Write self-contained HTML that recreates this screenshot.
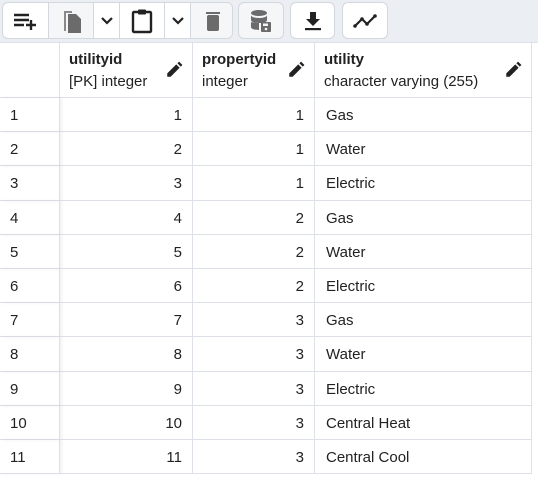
<!DOCTYPE html>
<html><head><meta charset="utf-8"><style>
*{box-sizing:border-box;margin:0;padding:0}
body{width:538px;height:489px;background:#fff;font-family:"Liberation Sans",Arial,sans-serif;color:#222;overflow:hidden;position:relative}
.tb{position:absolute;left:0;top:0;width:538px;height:43px;background:#ebeef2;border-bottom:1px solid #dde0e6}
.g{position:absolute;top:2px;height:37px;border:1px solid #d3d7de;border-radius:6px;background:#fff;overflow:hidden}
.s{position:absolute;top:0;height:100%;border-left:1px solid #d3d7de;display:flex;align-items:center;justify-content:center}
.dis{background:#f5f6f8}
svg{display:block}
.c{position:absolute;border-right:1px solid #dde0e6;border-bottom:1px solid #dde0e6;font-size:15px}
.h{font-size:15px;line-height:22px;padding:6px 0 0 9px}
.h b{font-weight:bold;color:#222}
.pen{position:absolute;right:9px;top:18px}
.num{text-align:right;padding-right:10px;line-height:36px}
.txt{padding-left:11px;line-height:36px}
.rn{padding-left:10px;line-height:36px;box-shadow:2px 0 3px rgba(0,0,0,.06)}
</style></head><body>
<div class="tb">
 <div class="g" style="left:2px;width:231px">
  <div class="s" style="left:0;width:45px;border:none"><svg width="26" height="20" viewBox="0 0 26 20"><path d="M1 4h15M1 9h15M1 14h10M18 9v10M13 14h10" stroke="#222" stroke-width="2.4" fill="none"/></svg></div>
  <div class="s dis" style="left:45px;width:45px"><svg width="22" height="26" viewBox="0 0 22 26"><path d="M4 3h8v2H6v18H4z" fill="#8a8a8a"/><path d="M8 6h8l5 5v14H8z" fill="#6b6b6b"/></svg></div>
  <div class="s" style="left:90px;width:26px"><svg width="14" height="10" viewBox="0 0 14 10"><path d="M2 2l5 5 5-5" stroke="#222" stroke-width="2.2" fill="none"/></svg></div>
  <div class="s" style="left:116px;width:45px"><svg width="22" height="26" viewBox="0 0 22 26"><rect x="2" y="4" width="18" height="20" rx="1" stroke="#222" stroke-width="2.4" fill="none"/><rect x="7" y="1.5" width="8" height="5" rx="1" fill="#222"/></svg></div>
  <div class="s" style="left:161px;width:26px"><svg width="14" height="10" viewBox="0 0 14 10"><path d="M2 2l5 5 5-5" stroke="#222" stroke-width="2.2" fill="none"/></svg></div>
  <div class="s dis" style="left:187px;width:44px"><svg width="16" height="22" viewBox="0 0 16 22"><rect x="1" y="2" width="14" height="2" fill="#6b6b6b"/><rect x="2" y="5" width="12" height="16" rx="2" fill="#6b6b6b"/></svg></div>
 </div>
 <div class="g dis" style="left:238px;width:46px"><div class="s" style="left:0;width:100%;border:none"><svg width="22" height="24" viewBox="0 0 22 24"><ellipse cx="9" cy="4" rx="8" ry="3" fill="#6b6b6b"/><path d="M1 6v5c0 2 4 3 8 3s8-1 8-3V6c0 2-4 3-8 3S1 8 1 6zM1 13v5c0 2 4 3 8 3V14c-4 0-8-1-8-1z" fill="#6b6b6b"/><rect x="11" y="13" width="10" height="10" rx="1" fill="#6b6b6b"/><rect x="13" y="14.5" width="5" height="2.5" fill="#f5f6f8"/><circle cx="16" cy="20" r="1.3" fill="#f5f6f8"/></svg></div></div>
 <div class="g" style="left:290px;width:45px"><div class="s" style="left:0;width:100%;border:none"><svg width="18" height="20" viewBox="0 0 18 20"><path d="M6 1h6v7h4l-7 7-7-7h4z" fill="#222"/><rect x="1" y="17" width="16" height="2.2" fill="#222"/></svg></div></div>
 <div class="g" style="left:342px;width:46px"><div class="s" style="left:0;width:100%;border:none"><svg width="24" height="14" viewBox="0 0 24 14"><path d="M2 12l7-7 5 5 8-8" stroke="#222" stroke-width="2.2" fill="none"/><circle cx="2" cy="12" r="1.8" fill="#222"/><circle cx="9" cy="5" r="1.8" fill="#222"/><circle cx="14" cy="10" r="1.8" fill="#222"/><circle cx="22" cy="2" r="1.8" fill="#222"/></svg></div></div>
</div>
<div id="t"></div>
<script>
var pen='<svg class="pen" width="18" height="18" viewBox="0 0 16 16"><path d="M2 14v-3l8-8 3 3-8 8z M11 2l1.5-1.5 3 3L14 5z" fill="#222"/></svg>';
var h='';
h+='<div class="c" style="left:0;top:43px;width:60px;height:55px"></div>';
h+='<div class="c h" style="left:60px;top:43px;width:133px;height:55px"><b>utilityid</b><br>[PK] integer'+pen+'</div>';
h+='<div class="c h" style="left:193px;top:43px;width:122px;height:55px"><b>propertyid</b><br>integer'+pen+'</div>';
h+='<div class="c h" style="left:315px;top:43px;width:217px;height:55px"><b>utility</b><br>character varying (255)'+pen+'</div>';
var d=[[1,1,'Gas'],[2,1,'Water'],[3,1,'Electric'],[4,2,'Gas'],[5,2,'Water'],[6,2,'Electric'],[7,3,'Gas'],[8,3,'Water'],[9,3,'Electric'],[10,3,'Central Heat'],[11,3,'Central Cool']];
for(var i=0;i<d.length;i++){var y=98+i*34.2;
h+='<div class="c rn" style="left:0;top:'+y+'px;width:60px;height:34.2px">'+d[i][0]+'</div>';
h+='<div class="c num" style="left:60px;top:'+y+'px;width:133px;height:34.2px">'+d[i][0]+'</div>';
h+='<div class="c num" style="left:193px;top:'+y+'px;width:122px;height:34.2px">'+d[i][1]+'</div>';
h+='<div class="c txt" style="left:315px;top:'+y+'px;width:217px;height:34.2px">'+d[i][2]+'</div>';}
document.getElementById('t').innerHTML=h;
</script>
</body></html>
